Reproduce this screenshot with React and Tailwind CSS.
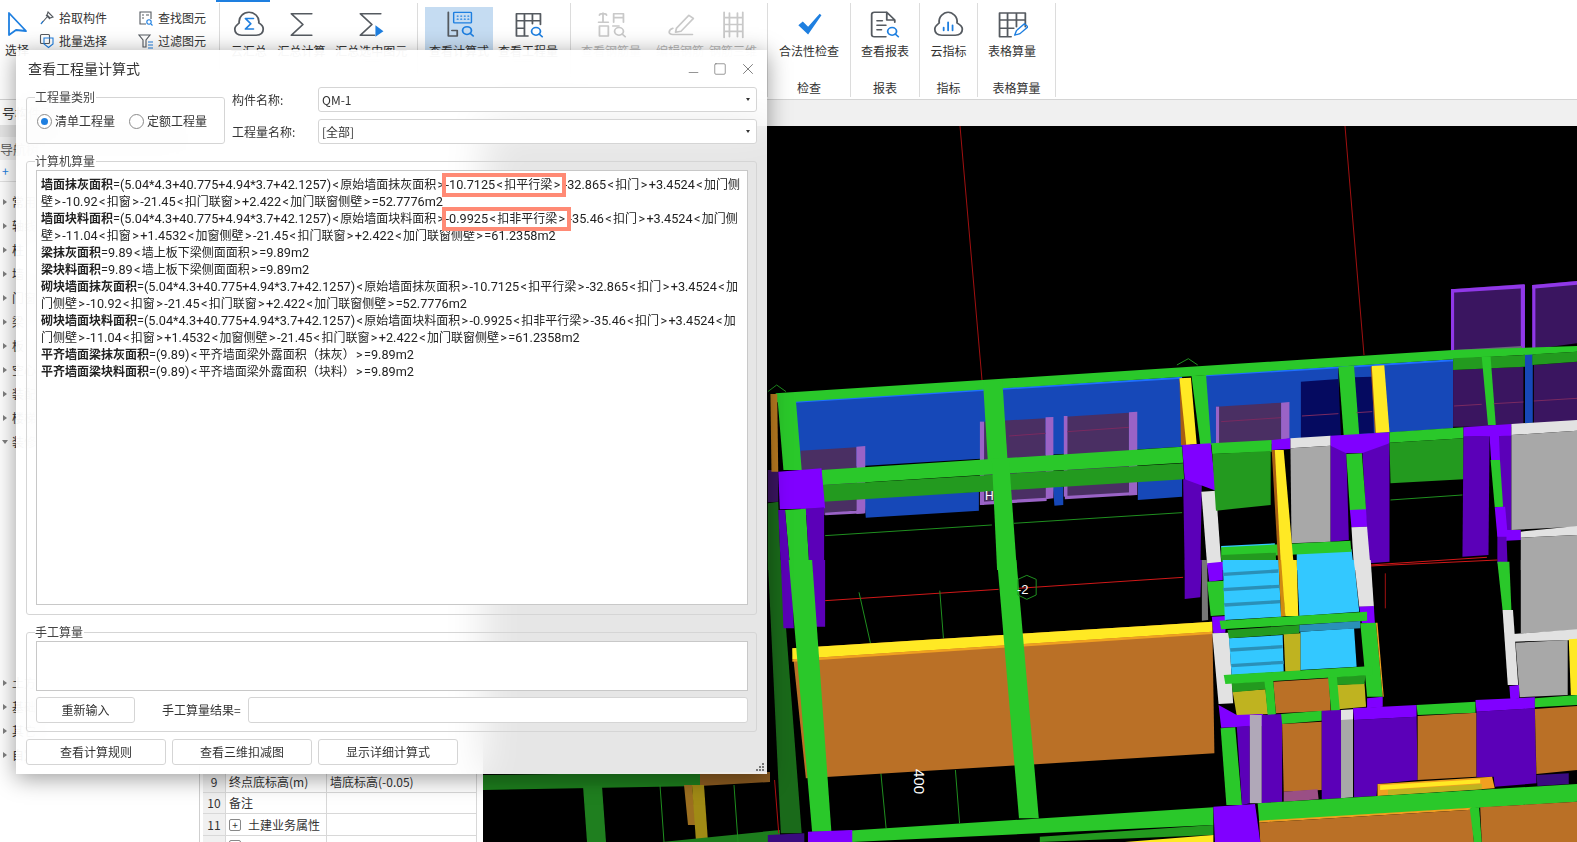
import { Minus, Square, X } from 'lucide-react';

const GREEN = '#2ac82a';
const DGREEN = '#239a1f';
const VIOLET = '#8000ff';
const DVIOLET = '#5b00b8';
const BLUE = '#1648b8';
const ORANGE = '#ba7026';
const YELLOW = '#ffe924';
const AMBER = '#f0a020';
const CYAN = '#33c8ff';
const TREAD = '#2a90b8';
const WHITE = '#e2e2e2';
const GRAY = '#a8a8a8';
const OLIVE = '#bfb320';
const PLUM = '#4a2f63';
const FRAME = '#9a63c6';
const DPLUM = '#3a1560';
const NAVY = '#050a60';

// upper part of the model, coordinates as read from the zoomed crop
const upperScene = [
  [DPLUM, '1326,58 1468,42 1468,240 1326,255'],
  [DPLUM, '1482,45 1568,33 1568,220 1482,238'],
  ['#9038e8', '1326,58 1467,43 1467,55 1326,68'],
  ['#9038e8', '1482,45 1568,33 1568,44 1482,56'],
  ['#9038e8', '1326,58 1332,58 1332,250 1326,252'],
  ['#9038e8', '1460,45 1468,45 1468,240 1460,242'],
  ['#9038e8', '1482,45 1488,45 1488,238 1482,240'],
  ['#6a6a7a', '1332,240 1462,228 1462,242 1332,252'],
  [BLUE, '68,392 810,322 810,530 68,600'],
  [BLUE, '855,315 1110,292 1110,500 855,525'],
  [BLUE, '1140,288 1330,270 1330,475 1140,495'],
  [BLUE, '200,680 420,665 420,722 203,743'],
  [BLUE, '725,630 810,622 810,680 725,690'],
  [BLUE, '562,650 582,650 582,705 565,707'],
  ['#1e6fff', '68,392 810,320 810,326 68,398'],
  ['#1e6fff', '855,313 1330,268 1330,274 855,319'],
  [PLUM, '78,542 185,532 185,720 125,735 78,735'],
  [FRAME, '185,530 202,528 202,730 185,732'],
  [FRAME, '125,728 200,720 200,730 125,736'],
  [PLUM, '430,455 548,445 548,690 430,700'],
  [FRAME, '422,455 430,455 430,705 422,705'],
  [FRAME, '548,442 563,441 563,685 548,688'],
  [FRAME, '425,695 550,683 550,693 425,705'],
  [PLUM, '585,440 708,428 708,670 585,680'],
  [FRAME, '708,427 724,425 724,675 708,676'],
  [FRAME, '583,438 590,438 590,680 583,680'],
  [FRAME, '585,678 722,666 722,675 585,688'],
  [PLUM, '875,410 1000,398 1000,520 875,530'],
  [FRAME, '1000,398 1016,396 1016,505 1000,510'],
  [FRAME, '875,410 881,410 881,525 875,525'],
  [NAVY, '1038,335 1110,327 1115,500 1038,505'],
  [NAVY, '1140,322 1175,320 1178,490 1143,492'],
  [DPLUM, '1330,300 1465,290 1465,470 1330,470'],
  [DPLUM, '1485,285 1568,275 1568,455 1485,460'],
  [BLUE, '1468,250 1483,250 1483,458 1468,460'],
  [GREEN, '30,370 1330,240 1568,228 1568,245 1330,268 68,395 30,397'],
  [DGREEN, '1330,265 1468,255 1468,290 1330,300'],
  [DGREEN, '1482,253 1568,245 1568,275 1482,285'],
  [GREEN, '1385,260 1402,260 1412,465 1397,465'],
  [GREEN, '33,375 68,375 80,600 45,600'],
  [GREEN, '428,335 465,330 475,570 437,570'],
  [GREEN, '828,318 856,315 866,525 845,525'],
  [GREEN, '1110,290 1140,287 1150,495 1120,495'],
  [GREEN, '118,600 810,530 812,578 120,645'],
  [DGREEN, '120,645 812,580 814,628 122,695'],
  [GREEN, '445,570 478,570 493,900 455,900'],
  ['#1a6a1a', '15,700 35,695 40,900 15,900'],
  [DPLUM, '15,600 35,600 35,695 15,697'],
  ['#b87a20', '20,372 33,372 35,605 22,605'],
  [VIOLET, '35,605 118,595 125,715 38,718'],
  [GREEN, '48,720 88,716 95,900 58,900'],
  [DVIOLET, '88,716 123,712 123,900 95,900'],
  [DVIOLET, '35,720 48,720 58,900 40,900'],
  ['#a85f12', '805,325 812,325 825,525 808,525'],
  [YELLOW, '805,325 827,323 838,522 818,525'],
  [DVIOLET, '812,628 848,625 845,900 815,900'],
  [VIOLET, '810,525 865,520 875,662 815,628'],
  [WHITE, '847,665 875,662 885,880 858,885'],
  [VIOLET, '858,885 885,880 888,900 860,900'],
  [GREEN, '866,520 982,510 982,545 868,552'],
  [DGREEN, '868,552 980,543 980,705 875,722'],
  [VIOLET, '982,510 1018,505 1018,537 982,540'],
  [WHITE, '1018,505 1095,497 1095,527 1018,535'],
  [GRAY, '1018,535 1095,527 1095,815 1020,820'],
  [DVIOLET, '1095,527 1125,527 1130,810 1095,815'],
  [DVIOLET, '1155,520 1208,520 1208,875 1168,880'],
  [VIOLET, '1095,497 1208,487 1208,520 1155,550 1125,550 1095,527'],
  [GREEN, '1125,552 1155,550 1163,720 1132,720'],
  [VIOLET, '1132,720 1163,718 1165,770 1135,772'],
  [WHITE, '1135,772 1165,770 1172,900 1140,900'],
  [CYAN, '885,875 990,865 990,900 888,900'],
  [CYAN, '1030,850 1135,838 1140,900 1030,900'],
  [CYAN, '885,828 988,820 988,828 885,835'],
  [GREEN, '885,832 1133,812 1135,845 885,865'],
  [DGREEN, '885,855 990,848 990,870 885,875'],
  ['#a85f12', '982,540 990,540 1003,900 995,900'],
  [YELLOW, '988,540 1005,540 1025,900 1000,900'],
  [GREEN, '1208,487 1350,472 1350,505 1208,518'],
  [DGREEN, '1208,518 1350,505 1350,628 1210,640'],
  [DVIOLET, '1350,500 1400,498 1398,855 1348,860'],
  [DVIOLET, '1415,497 1442,495 1442,780 1432,780 1435,900 1415,880'],
  [VIOLET, '1350,472 1442,462 1442,497 1350,500'],
  [VIOLET, '1400,497 1418,497 1420,570 1403,570'],
  [GREEN, '1402,570 1420,570 1426,710 1410,712'],
  [VIOLET, '1410,712 1430,710 1435,800 1415,800'],
  [WHITE, '1442,462 1568,450 1568,482 1442,495'],
  [GRAY, '1442,495 1568,482 1568,770 1442,780'],
  [VIOLET, '1432,780 1460,780 1460,810 1432,812'],
  [WHITE, '1460,785 1568,768 1568,795 1460,803'],
  [GRAY, '1460,803 1568,795 1568,900 1460,900'],
  ['#a85f12', '1172,290 1180,290 1190,488 1180,488'],
  [YELLOW, '1174,288 1198,286 1208,486 1182,488'],
];

// lower part of the model
const lowerScene = [
  ['#1a6a1a', '15,0 40,0 80,820 40,820'],
  [DVIOLET, '40,0 60,0 65,205 45,205'],
  [DVIOLET, '100,0 125,0 125,200 105,200'],
  [ORANGE, '62,265 868,185 872,580 88,655'],
  [YELLOW, '62,265 868,185 868,215 62,298'],
  [AMBER, '62,298 868,215 868,222 62,305'],
  [GREEN, '55,0 100,0 137,815 100,815'],
  [GREEN, '455,0 492,0 535,775 497,775'],
  [DVIOLET, '815,0 848,0 845,112 815,117'],
  [GREEN, '137,815 870,742 870,795 177,846'],
  [DGREEN, '537,830 870,795 870,825 537,846'],
  [YELLOW, '700,846 870,825 870,846'],
  [VIOLET, '92,815 177,810 177,846 92,846'],
  ['#3a0b80', '15,825 85,820 85,846 15,846'],
  ['#777777', '848,0 858,0 860,180 848,182'],
  [VIOLET, '858,10 888,5 888,60 862,65'],
  [GREEN, '858,65 890,62 895,165 865,168'],
  [VIOLET, '867,170 895,168 893,218 870,220'],
  [WHITE, '868,220 900,218 908,430 880,432'],
  [CYAN, '888,0 995,0 1000,170 892,180'],
  [TREAD, '888,38 995,28 995,38 890,48'],
  [TREAD, '888,84 997,74 997,84 890,94'],
  [TREAD, '890,130 998,120 998,130 892,140'],
  [CYAN, '1030,0 1140,0 1150,155 1035,168'],
  ['#d08a10', '995,0 1003,0 1008,168 1000,170'],
  [YELLOW, '1000,0 1030,0 1033,168 1008,168'],
  [WHITE, '1140,0 1172,0 1178,140 1150,140'],
  [VIOLET, '1150,140 1178,138 1180,190 1155,190'],
  [CYAN, '900,235 1003,225 1005,335 905,345'],
  [TREAD, '902,265 1003,255 1003,265 903,275'],
  [TREAD, '904,312 1005,302 1005,312 905,322'],
  [CYAN, '1037,215 1140,205 1145,320 1037,330'],
  [OLIVE, '1005,222 1037,220 1037,335 1008,335'],
  [GREEN, '882,182 1165,155 1165,182 885,208'],
  [DGREEN, '897,210 1035,195 1035,220 900,235'],
  [TREAD, '1035,195 1152,183 1152,205 1035,215'],
  [GREEN, '1152,190 1182,188 1195,410 1165,410'],
  [AMBER, '1182,188 1185,188 1197,410 1195,410'],
  [ORANGE, '985,365 1092,355 1095,452 990,460'],
  [OLIVE, '907,395 970,388 975,462 915,468'],
  [OLIVE, '1107,375 1160,370 1163,440 1110,448'],
  [DGREEN, '905,370 970,362 970,388 907,397'],
  [DGREEN, '1105,350 1162,345 1160,372 1107,375'],
  [GREEN, '968,362 985,362 990,462 975,476'],
  [GREEN, '1090,350 1107,350 1113,455 1097,468'],
  [GREEN, '890,345 1175,318 1175,345 893,372'],
  [VIOLET, '1165,415 1195,410 1195,440 1165,445'],
  [VIOLET, '880,435 915,465 965,462 965,498 885,503'],
  [GREEN, '884,505 912,502 925,735 895,735'],
  [DVIOLET, '915,500 940,497 940,730 925,735'],
  ['#b0a8b8', '940,465 963,465 963,730 940,730'],
  [DVIOLET, '963,465 1002,462 1002,725 963,730'],
  [GREEN, '1000,462 1078,452 1078,482 1002,492'],
  [ORANGE, '1002,492 1078,485 1078,690 1005,695'],
  ['#9a4f85', '1005,695 1070,688 1072,718 1005,725'],
  [DVIOLET, '1078,452 1115,450 1115,715 1078,718'],
  [GRAY, '1115,450 1138,450 1138,712 1115,715'],
  [WHITE, '1115,450 1138,448 1138,478 1115,480'],
  [DVIOLET, '1140,480 1260,470 1262,660 1185,672 1183,708 1140,712'],
  [VIOLET, '1138,445 1260,435 1260,470 1140,480'],
  [GREEN, '1260,435 1373,425 1373,458 1262,465'],
  [ORANGE, '1262,468 1375,458 1375,650 1262,660'],
  [DVIOLET, '1375,455 1487,445 1490,670 1410,680 1408,650 1375,652'],
  [VIOLET, '1373,420 1487,412 1487,445 1375,455'],
  [GREEN, '1487,415 1568,405 1568,435 1487,442'],
  [ORANGE, '1487,447 1568,438 1568,630 1490,642'],
  ['#3a0b80', '1490,645 1552,640 1552,672 1492,678'],
  [AMBER, '1185,672 1405,650 1410,685 1185,708'],
  [YELLOW, '1190,676 1382,658 1382,670 1190,690'],
  [OLIVE, '1205,690 1385,672 1385,688 1205,705'],
  [GREEN, '1415,5 1438,5 1442,150 1425,150'],
  [WHITE, '1425,150 1445,150 1455,375 1435,375'],
  [VIOLET, '1438,378 1457,375 1457,415 1440,420'],
  [GRAY, '1460,0 1568,0 1568,210 1460,220'],
  [WHITE, '1445,222 1568,208 1568,240 1445,245'],
  [GRAY, '1450,248 1550,240 1550,405 1458,412'],
  [YELLOW, '1552,238 1568,236 1568,405 1556,405'],
  [GREEN, '955,730 1568,672 1568,725 958,785'],
  [AMBER, '958,782 1365,743 1365,749 958,788'],
  [ORANGE, '958,788 1365,749 1370,846 960,846'],
  [ORANGE, '1382,742 1568,725 1568,846 1385,846'],
  [GREEN, '1362,745 1380,742 1385,846 1370,846'],
  [VIOLET, '870,740 950,732 960,846 873,846'],
];

const faintLines = [
  [590, 485, 708, 472], [885, 455, 1000, 443], [478, 498, 548, 490],
  [1040, 438, 1110, 431], [1145, 428, 1175, 425], [1332, 408, 1385, 403],
  [1408, 401, 1465, 396], [1485, 393, 1568, 385],
];

const Scene = () => (
  <svg viewBox="483 126 1094 716" className="block w-full h-full bg-black">
    {/* grid lines running up to the top of the view */}
    <line x1="960" y1="126" x2="982" y2="380" stroke="#a01010" />
    <line x1="1345" y1="126" x2="1364" y2="355" stroke="#a01010" />

    {/* strip under the dialog, bottom left */}
    <polygon fill="#1d7d1d" points="483,775 700,772 700,786 483,790" />
    <polygon fill="#8a5a20" points="700,772 770,772 770,782 700,786" />
    <polygon fill="#1f7f1f" points="583,786 602,786 606,842 587,842" />
    <polygon fill="#9c6f20" points="684,785 692,785 696,825 688,825" />
    <polygon fill="#a08a15" points="692,785 704,785 708,842 696,842" />
    <polygon fill="#1d7d1d" points="662,842 780,830 780,842" />
    <line x1="660" y1="785" x2="664" y2="842" stroke="#1f8f1f" strokeWidth="1" />
    <line x1="734" y1="785" x2="738" y2="842" stroke="#1f8f1f" strokeWidth="1" />

    <g transform="translate(760 270) scale(0.5211 0.3333)">
      {upperScene.map(([c, p], i) => <polygon key={i} fill={c} points={p} />)}
      {faintLines.map(([x1, y1, x2, y2]) => (
        <line key={x1} x1={x1} y1={y1} x2={x2} y2={y2} stroke="#7a2a60" vectorEffect="non-scaling-stroke" />
      ))}
      <line x1="125" y1="797" x2="445" y2="765" stroke="#1f8f1f" vectorEffect="non-scaling-stroke" />
      <line x1="487" y1="760" x2="810" y2="728" stroke="#1f8f1f" vectorEffect="non-scaling-stroke" />
      <line x1="1210" y1="690" x2="1348" y2="675" stroke="#1f8f1f" vectorEffect="non-scaling-stroke" />
      <line x1="1170" y1="885" x2="1395" y2="862" stroke="#d01818" vectorEffect="non-scaling-stroke" />
      <polyline fill="none" stroke="#1f8f1f" points="800,285 822,266 840,285" vectorEffect="non-scaling-stroke" />
      <polyline fill="none" stroke="#1f8f1f" points="15,365 32,345 50,365" vectorEffect="non-scaling-stroke" />
    </g>

    <g transform="translate(760 560) scale(0.5211 0.3333)">
      <line x1="125" y1="122" x2="458" y2="88" stroke="#d01818" vectorEffect="non-scaling-stroke" />
      <line x1="495" y1="85" x2="812" y2="52" stroke="#d01818" vectorEffect="non-scaling-stroke" />
      <line x1="1170" y1="18" x2="1415" y2="0" stroke="#d01818" vectorEffect="non-scaling-stroke" />
      <line x1="1200" y1="40" x2="1200" y2="145" stroke="#a01010" vectorEffect="non-scaling-stroke" />
      <line x1="190" y1="97" x2="212" y2="250" stroke="#1f8f1f" vectorEffect="non-scaling-stroke" />
      <line x1="345" y1="92" x2="352" y2="235" stroke="#1f8f1f" vectorEffect="non-scaling-stroke" />
      <line x1="232" y1="640" x2="242" y2="805" stroke="#1f8f1f" vectorEffect="non-scaling-stroke" />
      <line x1="375" y1="630" x2="383" y2="790" stroke="#1f8f1f" vectorEffect="non-scaling-stroke" />
      <line x1="28" y1="660" x2="36" y2="820" stroke="#b01010" vectorEffect="non-scaling-stroke" />
      {lowerScene.map(([c, p], i) => <polygon key={i} fill={c} points={p} />)}
      <polygon fill="none" stroke="#1f8f1f" points="512,46 530,58 530,105 512,118 495,105 495,58" vectorEffect="non-scaling-stroke" />
    </g>

    <text x="1017" y="594" fill="#fff" fontSize="13" fontFamily="Liberation Sans, sans-serif">-2</text>
    <text x="985" y="500" fill="#fff" fontSize="12" fontFamily="Liberation Sans, sans-serif">H</text>
    <text transform="translate(914 769) rotate(90)" fill="#fff" fontSize="15" fontFamily="Liberation Sans, sans-serif">400</text>
  </svg>
);

/* ribbon icons */
const stroke = { fill: 'none', stroke: '#555a60', strokeWidth: 2, strokeLinejoin: 'round', strokeLinecap: 'round' };
const faded = { ...stroke, stroke: '#c9c9c9' };
const blue = { fill: 'none', stroke: '#1e7fe0', strokeWidth: 2, strokeLinecap: 'round', strokeLinejoin: 'round' };

const Lens = ({ x, y, r = 5, p = blue }) => (
  <>
    <circle cx={x} cy={y} r={r} {...p} />
    <line x1={x + r * 0.7} y1={y + r * 0.7} x2={x + r + 2} y2={y + r + 2} {...p} />
  </>
);

const icons = {
  cloudSum: (
    <>
      <path d="M10 33c-5 0-8-3-8-8 0-4 3-6 5-8-1-8 5-14 11-14s12 6 11 14c3 2 5 4 5 8 0 5-3 8-8 8z" {...stroke} />
      <path d="M23 11h-9l6 7-6 7h9" {...blue} />
    </>
  ),
  sum: <path d="M29 5H6l13 14L6 33h23" {...stroke} />,
  sumSel: (
    <>
      <path d="M29 5H6l13 14L6 33h16" {...stroke} />
      <path d="M23 20l9 8-9 7z" fill="#1e7fe0" />
    </>
  ),
  calc: (
    <>
      <rect x="12" y="3" width="20" height="14" rx="1" {...blue} strokeWidth="1.6" />
      <path d="M16 8h1m3 0h1m3 0h1m3 0h1M16 12h1m3 0h1m3 0h1m3 0h1" {...blue} strokeWidth="1.4" />
      <path d="M6 3v31h10v-7h-6" {...stroke} />
      <Lens x={27} y={27} r={5} />
    </>
  ),
  qty: (
    <>
      <path d="M18 34H5V5h27v14M5 14h27M14 5v29M23 5v13M5 24h9" {...stroke} />
      <Lens x={27} y={28} r={5} />
    </>
  ),
  rebar: (
    <>
      <path d="M4 16h11M9 4v12M5 7c0-3 8-3 8 0M21 16V5h11v11M21 10h11M5 34V21h10v13zM5 34h10M20 21h7" {...faded} />
      <Lens x={27} y={28} r={5} p={faded} />
    </>
  ),
  edit: (
    <>
      <path d="M14 24L28 7l5 4-14 17-6 1z" {...faded} />
      <path d="M10 24c-5 2-6 8 0 8h22" {...faded} />
    </>
  ),
  rebar3d: <path d="M8 3v33M29 3v33M8 10h21M8 19h21M8 28h21M14 4v31M23 4v31" {...faded} />,
  check: <path d="M6 20l5-5 6 7L30 5l2 2-15 25z" fill="#1e7fe0" />,
  report: (
    <>
      <path d="M20 3H6a3 3 0 0 0-3 3v26a3 3 0 0 0 3 3h13M20 3l9 10v3M20 3v10h9" {...stroke} />
      <path d="M9 14h6M9 20h10M9 26h5" {...stroke} />
      <Lens x={26} y={28} r={5} />
    </>
  ),
  cloudBar: (
    <>
      <path d="M10 33c-5 0-8-3-8-8 0-4 3-6 5-8-1-8 5-14 10-14s11 6 10 14c3 2 6 4 6 8 0 5-3 8-8 8z" {...stroke} />
      <path d="M12 23v4M17 16v11M22 20v7" {...blue} />
    </>
  ),
  sheet: (
    <>
      <path d="M17 35H4V4h29v18M4 13h29M13 4v31M23 4v18M4 24h16" {...stroke} />
      <path d="M21 33l2-6 9-9 4 4-9 9z" {...blue} strokeWidth="1.6" />
    </>
  ),
};

const BigItem = ({ w, icon, label, active, disabled }) => (
  <div className={`flex flex-col items-center h-[43px] pt-[3px] ${w} ${active ? 'bg-[#c5dcf2]' : ''}`}>
    <svg viewBox="0 0 36 38" className="w-[32px] h-[29px] shrink-0" preserveAspectRatio="none">{icons[icon]}</svg>
    <span className={`mt-[3px] leading-[17px] whitespace-nowrap ${disabled ? 'text-[#b5b5b5]' : 'text-[#333]'}`}>{label}</span>
  </div>
);

const RibbonGroup = ({ w, label, children, className = '' }) => (
  <div className={`flex flex-col h-[94px] border-r border-[#dcdcdc] ${w}`}>
    <div className={`flex flex-1 pt-[4px] ${className}`}>{children}</div>
    {label && <div className="text-center leading-[17px] pb-[1px] text-[#333]">{label}</div>}
  </div>
);

const SmallItem = ({ children, label }) => (
  <div className="flex items-center gap-[4px] h-[23px] whitespace-nowrap text-[#333]">
    <svg viewBox="0 0 16 16" className="w-[16px] h-[16px]" fill="none" stroke="#555a60" strokeWidth="1.1">{children}</svg>
    {label}
  </div>
);

const Ribbon = () => (
  <div className="relative h-[100px] bg-white border-b border-[#d4d4d4] flex items-start pt-[3px] shrink-0">
    <div className="absolute left-[216px] top-0 w-[54px] h-[2px] bg-[#1e7fe0]" />
    <RibbonGroup w="w-[220px]" className="pl-[3px]">
      <div className="flex flex-col items-center w-[28px] pt-[4px]">
        <svg viewBox="0 0 22 26" className="w-[22px] h-[26px]">
          <path d="M3 2l17 18-10-1-7 5z" fill="none" stroke="#1e7fe0" strokeWidth="1.8" strokeLinejoin="round" />
        </svg>
        <span className="mt-[4px] leading-[17px] whitespace-nowrap text-[#333]">选择</span>
      </div>
      <div className="flex flex-col pl-[8px] w-[107px] -mt-[1px]">
        <SmallItem label="拾取构件">
          <path d="M2 14l6-7M7 5l4 4M9 2l5 5-3 1-3-3z" />
          <path d="M2 14l2-3" stroke="#1e7fe0" />
        </SmallItem>
        <SmallItem label="批量选择">
          <rect x="1.5" y="1.5" width="9" height="9" rx="1" />
          <path d="M5 5h9v6l-4.5 3.5L5 11z" stroke="#1e7fe0" />
        </SmallItem>
      </div>
      <div className="flex flex-col -mt-[1px]">
        <SmallItem label="查找图元">
          <path d="M13 9V2H2v12h6M4 5h2M8 5h3M4 8h2" />
          <circle cx="11" cy="12" r="2.2" stroke="#1e7fe0" />
          <path d="M13 14l1.5 1.5" stroke="#1e7fe0" />
        </SmallItem>
        <SmallItem label="过滤图元">
          <path d="M1 2h11L8 7v7H5V7z" />
          <path d="M10 9h5M10 12h5M10 15h5" stroke="#1e7fe0" />
        </SmallItem>
      </div>
    </RibbonGroup>
    <RibbonGroup w="w-[198px]">
      <BigItem w="w-[58px]" icon="cloudSum" label="云汇总" />
      <BigItem w="w-[48px]" icon="sum" label="汇总计算" />
      <BigItem w="w-[92px]" icon="sumSel" label="汇总选中图元" />
    </RibbonGroup>
    <RibbonGroup w="w-[153px]" className="pl-[7px]">
      <BigItem w="w-[68px]" icon="calc" label="查看计算式" active />
      <BigItem w="w-[70px]" icon="qty" label="查看工程量" />
    </RibbonGroup>
    <RibbonGroup w="w-[197px]">
      <BigItem w="w-[80px]" icon="rebar" label="查看钢筋量" disabled />
      <BigItem w="w-[58px]" icon="edit" label="编辑钢筋" disabled />
      <BigItem w="w-[48px]" icon="rebar3d" label="钢筋三维" disabled />
    </RibbonGroup>
    <RibbonGroup w="w-[83px]" label="检查">
      <BigItem w="w-full" icon="check" label="合法性检查" />
    </RibbonGroup>
    <RibbonGroup w="w-[69px]" label="报表">
      <BigItem w="w-full" icon="report" label="查看报表" />
    </RibbonGroup>
    <RibbonGroup w="w-[58px]" label="指标">
      <BigItem w="w-full" icon="cloudBar" label="云指标" />
    </RibbonGroup>
    <RibbonGroup w="w-[78px]" label="表格算量" className="pr-[9px]">
      <BigItem w="w-full" icon="sheet" label="表格算量" />
    </RibbonGroup>
  </div>
);

const treeTop = ['常用构件', '轴线', '柱', '墙', '门窗洞', '梁', '板', '空心楼盖', '装配式', '楼梯', '装修'];
const treeBottom = ['土方', '基础', '其它', '自定义'];

const TreeRow = ({ label, open }) => (
  <div className="flex items-center h-[24px] pl-[2px] gap-[4px] text-[#333] whitespace-nowrap">
    {open ? (
      <span className="w-0 h-0 border-x-[3px] border-x-transparent border-t-[4px] border-t-[#808080]" />
    ) : (
      <span className="w-0 h-0 ml-[1px] mr-[1px] border-y-[3px] border-y-transparent border-l-[4px] border-l-[#808080]" />
    )}
    {label}
  </div>
);

const LeftPanel = () => (
  <div className="w-[200px] shrink-0 bg-white border-r border-[#cfcfcf] overflow-hidden">
    <div className="h-[25px] flex items-center pl-[2px] text-[#333] whitespace-nowrap text-[13px]">号构件列表</div>
    <div className="h-[12px] bg-[#e6e6e6]" />
    <div className="h-[23px] bg-[#f2f2f2] flex items-center text-[#666] whitespace-nowrap text-[13px]">导航树</div>
    <div className="h-[22px] flex items-center pl-[2px] text-[#1e7fe0] border-b border-[#e2e2e2]">+</div>
    <div className="pt-[8px]">
      {treeTop.map((t) => <TreeRow key={t} label={t} open={t === '装修'} />)}
    </div>
    <div className="mt-[217px]">
      {treeBottom.map((t) => <TreeRow key={t} label={t} />)}
    </div>
  </div>
);

const PropRow = ({ no, name, value, plus, h = 'h-[21px]' }) => (
  <div className={`flex ${h} border-b border-[#d8d8d8] text-[#333] whitespace-nowrap`}>
    <div className="w-[23px] bg-[#f0f0f0] border-r border-[#d8d8d8] flex items-center justify-center">{no}</div>
    <div className="w-[101px] border-r border-[#d8d8d8] flex items-center pl-[3px] gap-[7px]">
      {plus && (
        <span className="w-[12px] h-[12px] border border-[#888] rounded-[2px] flex items-center justify-center text-[10px] leading-none">+</span>
      )}
      {name}
    </div>
    <div className="flex-1 flex items-center pl-[3px]">{value}</div>
  </div>
);

const PropPanel = () => (
  <div className="w-[283px] shrink-0 bg-white overflow-hidden pt-[672px] pl-[3px] pr-[6px]">
    <div className="border-r border-[#d8d8d8]">
      <PropRow no="9" name="终点底标高(m)" value="墙底标高(-0.05)" />
      <PropRow no="10" name="备注" />
      <PropRow no="11" name="土建业务属性" plus h="h-[22px]" />
      <PropRow no="12" name="" plus />
    </div>
  </div>
);

const Group = ({ title, className = '', children }) => (
  <fieldset className={`border border-[#d5d5d5] rounded-[3px] min-w-0 ${className}`}>
    <legend className="ml-[8px] pr-[1px] leading-[16px] text-[#444]">{title}</legend>
    {children}
  </fieldset>
);

const Radio = ({ checked, label }) => (
  <label className="flex items-center gap-[3px] text-[#333]">
    <span className="w-[15px] h-[15px] rounded-full border border-[#8a8a8a] bg-white flex items-center justify-center">
      {checked && <span className="w-[7px] h-[7px] rounded-full bg-[#1e7fe0]" />}
    </span>
    {label}
  </label>
);

const SelectBox = ({ value }) => (
  <div className="flex-1 h-[25px] bg-white border border-[#d5d5d5] rounded-[3px] flex items-center justify-between pl-[3px] pr-[6px] text-[#333]">
    {value}
    <span className="w-0 h-0 border-x-[2px] border-x-transparent border-t-[3px] border-t-[#333]" />
  </div>
);

const Btn = ({ w, children }) => (
  <button className={`${w} h-[26px] bg-white border border-[#d5d5d5] rounded-[3px] text-[#333] shrink-0`}>{children}</button>
);

// latin runs in the formula are a little larger and the angle brackets get side room, as in the original
const T = ({ children }) =>
  children.split(/([<>]|[\x20-\x3b=?-\x7e]+)/).map((part, i) => {
    if (i % 2 === 0) return part;
    if (part === '<' || part === '>') return <span key={i} className="text-[12.7px] px-[1.35px]">{part}</span>;
    return <span key={i} className="text-[12.7px]">{part}</span>;
  });

const Hl = ({ children }) => <span className="outline-4 outline-[#ff8a75] py-[1px] mr-[2px]"><T>{children}</T></span>;

const Formula = () => (
  <div className="h-[435px] bg-white border border-[#c8c8c8] ml-[9px] mr-[8px] mt-[1px] px-[4px] pt-[5px] leading-[17px] text-[#222] whitespace-nowrap overflow-hidden font-['Roboto','Noto_Sans_CJK_SC',sans-serif] [&>div]:h-[17px]">
    <div><b>墙面抹灰面积</b><T>=(5.04*4.3+40.775+4.94*3.7+42.1257)&lt;原始墙面抹灰面积&gt;</T><Hl>-10.7125&lt;扣平行梁&gt;</Hl><T>-32.865&lt;扣门&gt;+3.4524&lt;加门侧</T></div>
    <div><T>壁&gt;-10.92&lt;扣窗&gt;-21.45&lt;扣门联窗&gt;+2.422&lt;加门联窗侧壁&gt;=52.7776m2</T></div>
    <div><b>墙面块料面积</b><T>=(5.04*4.3+40.775+4.94*3.7+42.1257)&lt;原始墙面块料面积&gt;</T><Hl>-0.9925&lt;扣非平行梁&gt;</Hl><T>-35.46&lt;扣门&gt;+3.4524&lt;加门侧</T></div>
    <div><T>壁&gt;-11.04&lt;扣窗&gt;+1.4532&lt;加窗侧壁&gt;-21.45&lt;扣门联窗&gt;+2.422&lt;加门联窗侧壁&gt;=61.2358m2</T></div>
    <div><b>梁抹灰面积</b><T>=9.89&lt;墙上板下梁侧面面积&gt;=9.89m2</T></div>
    <div><b>梁块料面积</b><T>=9.89&lt;墙上板下梁侧面面积&gt;=9.89m2</T></div>
    <div><b>砌块墙面抹灰面积</b><T>=(5.04*4.3+40.775+4.94*3.7+42.1257)&lt;原始墙面抹灰面积&gt;-10.7125&lt;扣平行梁&gt;-32.865&lt;扣门&gt;+3.4524&lt;加</T></div>
    <div><T>门侧壁&gt;-10.92&lt;扣窗&gt;-21.45&lt;扣门联窗&gt;+2.422&lt;加门联窗侧壁&gt;=52.7776m2</T></div>
    <div><b>砌块墙面块料面积</b><T>=(5.04*4.3+40.775+4.94*3.7+42.1257)&lt;原始墙面块料面积&gt;-0.9925&lt;扣非平行梁&gt;-35.46&lt;扣门&gt;+3.4524&lt;加</T></div>
    <div><T>门侧壁&gt;-11.04&lt;扣窗&gt;+1.4532&lt;加窗侧壁&gt;-21.45&lt;扣门联窗&gt;+2.422&lt;加门联窗侧壁&gt;=61.2358m2</T></div>
    <div><b>平齐墙面梁抹灰面积</b><T>=(9.89)&lt;平齐墙面梁外露面积（抹灰）&gt;=9.89m2</T></div>
    <div><b>平齐墙面梁块料面积</b><T>=(9.89)&lt;平齐墙面梁外露面积（块料）&gt;=9.89m2</T></div>
  </div>
);

const Dialog = () => (
  <div className="absolute left-[16px] top-[50px] w-[751px] h-[724px] bg-white/90 backdrop-blur-[20px] shadow-[0_4px_22px_rgba(0,0,0,0.4)] flex flex-col">
    <div className="h-[37px] shrink-0 flex items-center justify-between pl-[12px] pr-[10px]">
      <span className="text-[14px] text-[#333]">查看工程量计算式</span>
      <div className="flex items-center gap-[12px] text-[#555]">
        <Minus size={15} strokeWidth={1} className="mt-[8px]" />
        <Square size={14} strokeWidth={1} />
        <X size={18} strokeWidth={1} />
      </div>
    </div>

    <div className="px-[10px] flex flex-col flex-1">
      <div className="flex h-[57px]">
        <Group title="工程量类别" className="w-[199px] mt-[2px] h-[55px]">
          <div className="flex items-center gap-[14px] pl-[10px] pt-[7px]">
            <Radio checked label="清单工程量" />
            <Radio label="定额工程量" />
          </div>
        </Group>
        <div className="flex-1 flex flex-col gap-[7px] pl-[7px]">
          <div className="flex items-center">
            <span className="w-[86px] text-[#333]">构件名称:</span>
            <SelectBox value="QM-1" />
          </div>
          <div className="flex items-center">
            <span className="w-[86px] text-[#333]">工程量名称:</span>
            <SelectBox value="[全部]" />
          </div>
        </div>
      </div>

      <Group title="计算机算量" className="mt-[9px] h-[462px]">
        <Formula />
      </Group>

      <Group title="手工算量" className="mt-[9px] h-[108px]">
        <div className="h-[50px] bg-white border border-[#c8c8c8] ml-[9px] mr-[8px] mt-[1px]" />
        <div className="flex items-center ml-[9px] mr-[8px] mt-[6px]">
          <Btn w="w-[99px]">重新输入</Btn>
          <span className="ml-[27px] w-[86px] text-[#333] whitespace-nowrap">手工算量结果=</span>
          <div className="flex-1 h-[26px] bg-white border border-[#d5d5d5] rounded-[3px]" />
        </div>
      </Group>

      <div className="flex gap-[6px] mt-[7px]">
        <Btn w="w-[140px]">查看计算规则</Btn>
        <Btn w="w-[140px]">查看三维扣减图</Btn>
        <Btn w="w-[140px]">显示详细计算式</Btn>
      </div>
    </div>

    <svg viewBox="0 0 9 9" className="absolute right-[2px] bottom-[2px] w-[9px] h-[9px]" fill="#777">
      <rect x="6" y="0" width="2" height="2" />
      <rect x="3" y="3" width="2" height="2" />
      <rect x="6" y="3" width="2" height="2" />
      <rect x="0" y="6" width="2" height="2" />
      <rect x="3" y="6" width="2" height="2" />
      <rect x="6" y="6" width="2" height="2" />
    </svg>
  </div>
);

export default function App() {
  return (
    <div className="relative w-[1577px] h-[842px] overflow-hidden bg-white text-[12px] font-['Noto_Sans_CJK_SC','Noto_Sans',sans-serif]">
      <Ribbon />
      <div className="flex h-[742px]">
        <LeftPanel />
        <PropPanel />
        <div className="flex-1 flex flex-col min-w-0">
          <div className="h-[26px] bg-[#f0f0f0] shrink-0" />
          <div className="h-[716px]">
            <Scene />
          </div>
        </div>
      </div>
      <Dialog />
    </div>
  );
}
